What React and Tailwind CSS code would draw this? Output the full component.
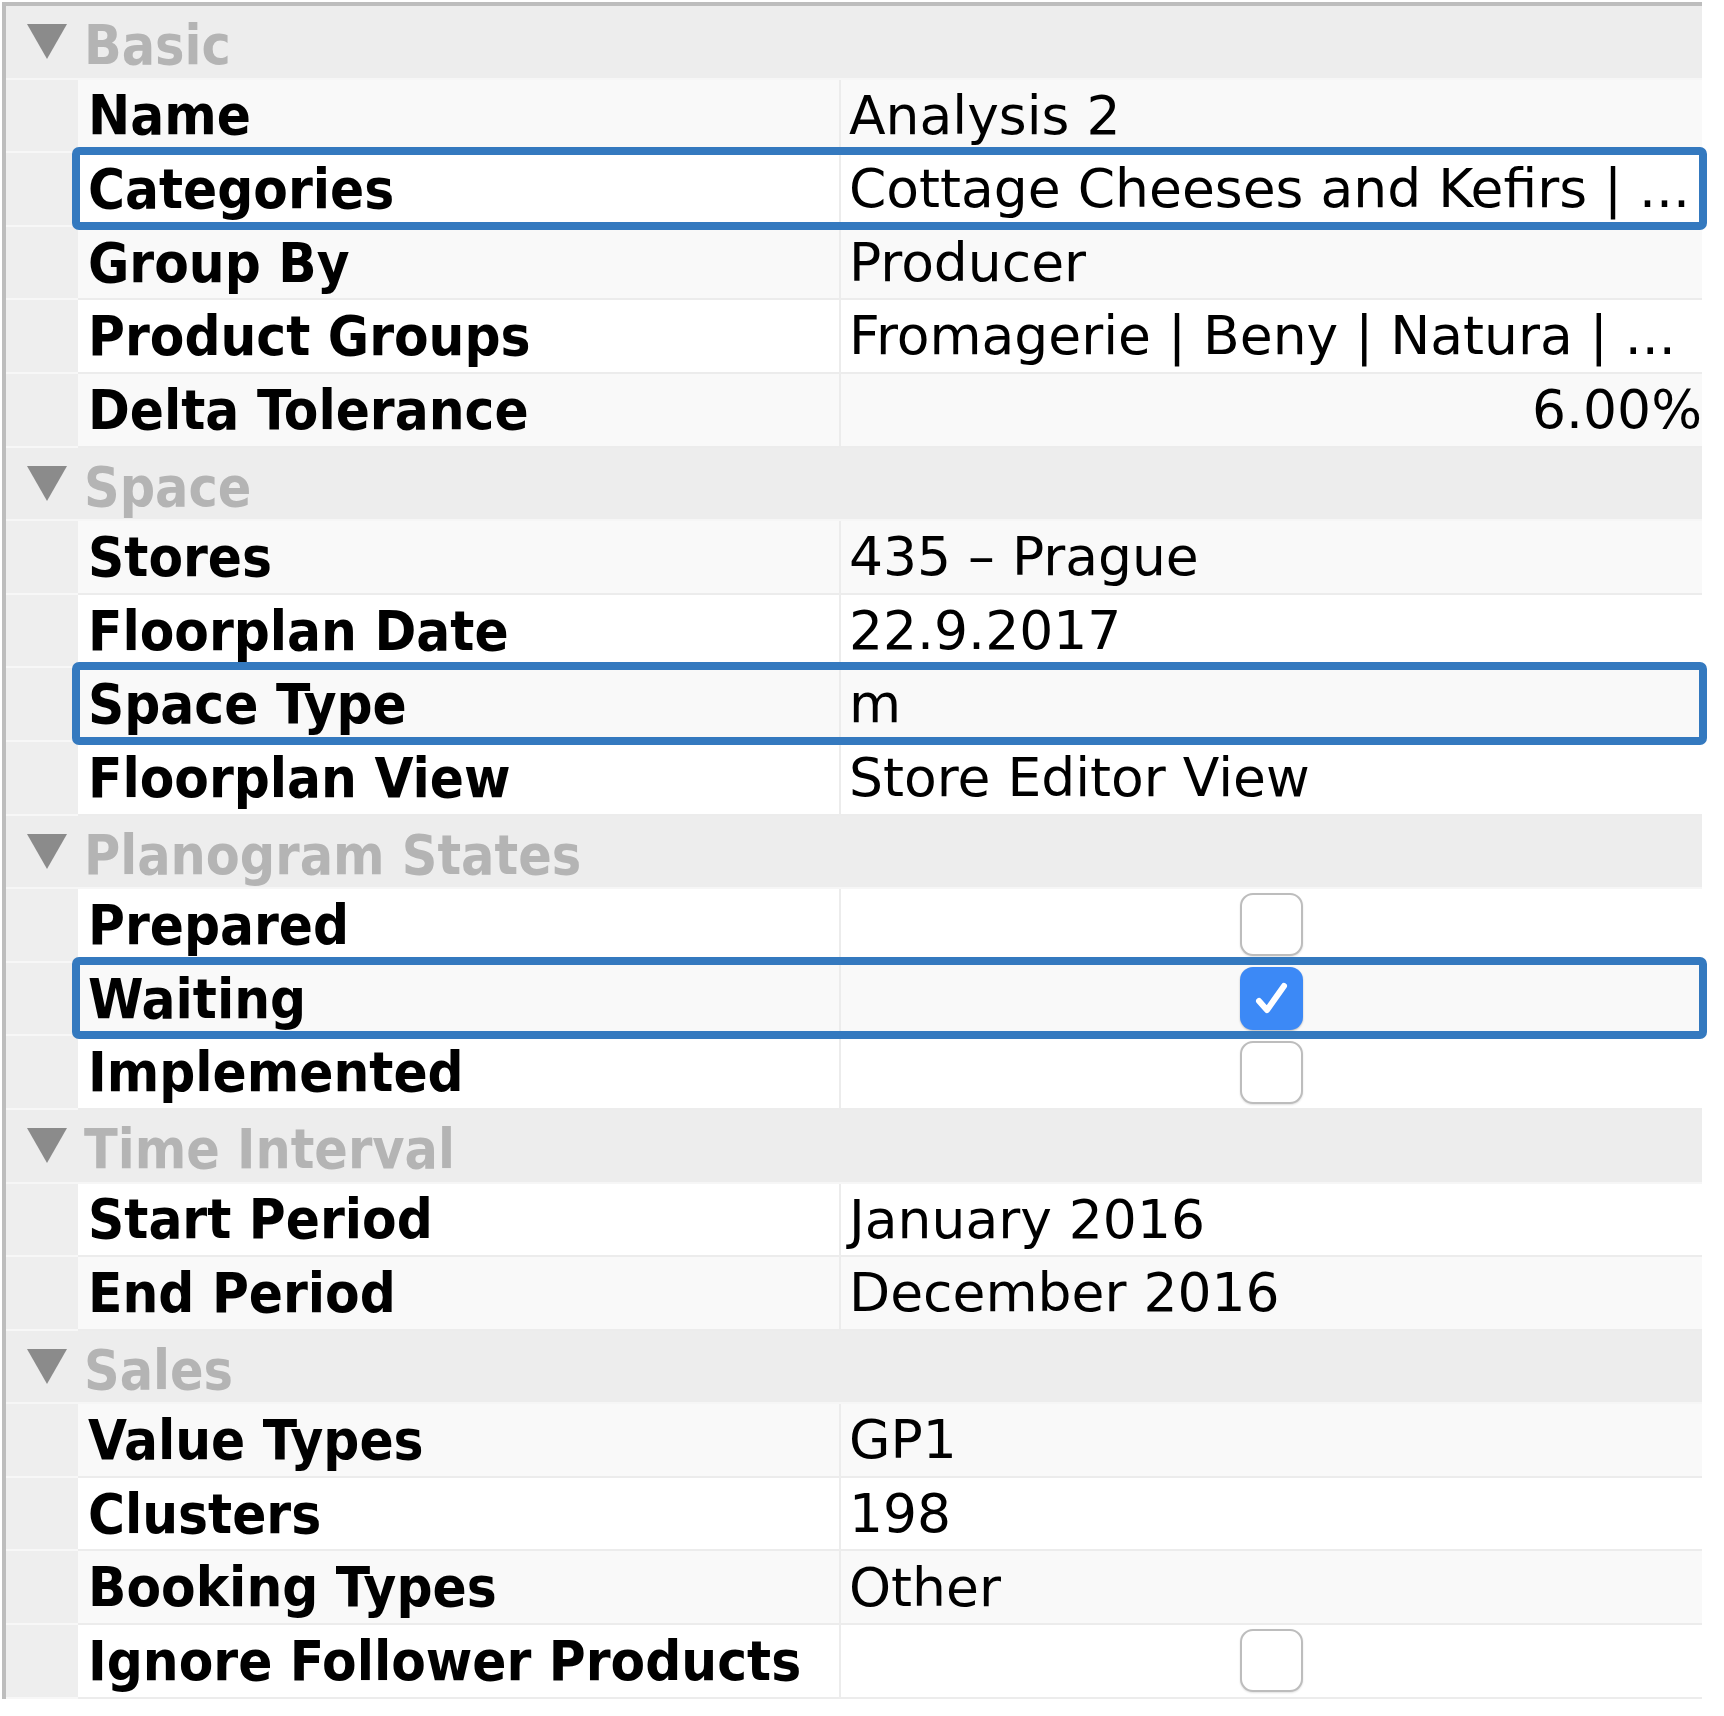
import React from "react";

const groups = [
  {
    title: "Basic",
    rows: [
      { label: "Name", value: "Analysis 2" },
      { label: "Categories", value: "Cottage Cheeses and Kefirs | ...", selected: true },
      { label: "Group By", value: "Producer" },
      { label: "Product Groups", value: "Fromagerie | Beny | Natura | ..." },
      { label: "Delta Tolerance", value: "6.00%", right: true },
    ],
  },
  {
    title: "Space",
    rows: [
      { label: "Stores", value: "435 – Prague" },
      { label: "Floorplan Date", value: "22.9.2017" },
      { label: "Space Type", value: "m", selected: true },
      { label: "Floorplan View", value: "Store Editor View" },
    ],
  },
  {
    title: "Planogram States",
    rows: [
      { label: "Prepared", check: false },
      { label: "Waiting", check: true, selected: true },
      { label: "Implemented", check: false },
    ],
  },
  {
    title: "Time Interval",
    rows: [
      { label: "Start Period", value: "January 2016" },
      { label: "End Period", value: "December 2016" },
    ],
  },
  {
    title: "Sales",
    rows: [
      { label: "Value Types", value: "GP1" },
      { label: "Clusters", value: "198" },
      { label: "Booking Types", value: "Other" },
      { label: "Ignore Follower Products", check: false },
    ],
  },
];

const labelFont = {
  fontFamily: '"DejaVu Sans Condensed", "DejaVu Sans", sans-serif',
};

function Checkbox({ checked }) {
  if (checked) {
    return (
      <div className="w-[63px] h-[63px] rounded-[13px] bg-[#3c89f6] flex items-center justify-center shadow-[0_1px_2px_rgba(0,0,0,0.25)]">
        <svg width="44" height="44" viewBox="0 0 44 44">
          <polyline
            points="9,24 17,33 34,9"
            fill="none"
            stroke="white"
            strokeWidth="6"
            strokeLinecap="round"
            strokeLinejoin="round"
          />
        </svg>
      </div>
    );
  }
  return (
    <div className="w-[63px] h-[63px] rounded-[13px] bg-white border-2 border-[#bdbdbd] shadow-[0_1px_2px_rgba(0,0,0,0.12)]" />
  );
}

function GroupHeader({ title }) {
  return (
    <div className="flex items-center h-[73.6px] bg-[#ededed] border-b-2 border-[#f6f6f6]">
      <div className="w-[78px] shrink-0 pl-[21px] flex items-center">
        <svg width="40" height="35" viewBox="0 0 40 35">
          <polygon points="0,0 40,0 20,35" fill="#8b8b8b" />
        </svg>
      </div>
      <span className="mt-[8px] text-[55px] leading-none font-bold text-[#b4b4b4] whitespace-nowrap" style={labelFont}>
        {title}
      </span>
    </div>
  );
}

function PropRow({ row, odd }) {
  const bg = odd ? "bg-[#f9f9f9]" : "bg-white";
  return (
    <div className="relative flex h-[73.6px]">
      <div className="w-[72px] shrink-0 bg-[#eeeeee] border-b-2 border-[#f7f7f7]" />
      <div className={`flex flex-1 min-w-0 border-b-2 border-[#ececec] ${bg}`}>
        <div className="w-[763px] shrink-0 flex items-center pl-[10px] border-r-2 border-[#ececec]">
          <span className="text-[56px] leading-none font-bold text-black whitespace-nowrap" style={labelFont}>
            {row.label}
          </span>
        </div>
        <div
          className={`flex-1 min-w-0 flex items-center overflow-hidden ${
            row.check !== undefined ? "justify-center" : row.right ? "justify-end" : "pl-[8px]"
          }`}
        >
          {row.check !== undefined ? (
            <Checkbox checked={row.check} />
          ) : (
            <span className="text-[53.5px] leading-none text-black whitespace-nowrap font-['DejaVu_Sans',sans-serif]">
              {row.value}
            </span>
          )}
        </div>
      </div>
      {row.selected && (
        <div className="absolute z-10 left-[66px] -right-[5px] -top-[6px] -bottom-[3px] border-8 border-[#3479bf] rounded-[7px] pointer-events-none" />
      )}
    </div>
  );
}

export default function App() {
  let idx = 0;
  return (
    <div className="w-[1724px] h-[1716px] bg-white overflow-hidden">
      <div className="ml-[2px] mt-[2px] w-[1700px] border-t-4 border-l-4 border-[#bdbdbd]">
        {groups.map((g) => {
          idx += 1;
          return (
            <div key={g.title}>
              <GroupHeader title={g.title} />
              {g.rows.map((r) => {
                idx += 1;
                return <PropRow key={r.label} row={r} odd={idx % 2 === 0} />;
              })}
            </div>
          );
        })}
      </div>
    </div>
  );
}
